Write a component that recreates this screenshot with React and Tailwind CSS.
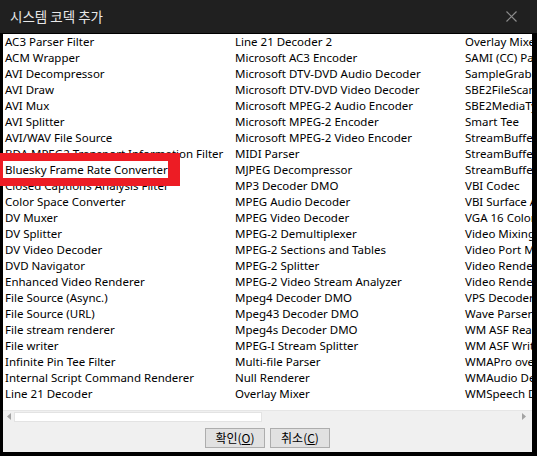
import React from "react";

const col1 = [
  "AC3 Parser Filter",
  "ACM Wrapper",
  "AVI Decompressor",
  "AVI Draw",
  "AVI Mux",
  "AVI Splitter",
  "AVI/WAV File Source",
  "BDA MPEG2 Transport Information Filter",
  "Bluesky Frame Rate Converter",
  "Closed Captions Analysis Filter",
  "Color Space Converter",
  "DV Muxer",
  "DV Splitter",
  "DV Video Decoder",
  "DVD Navigator",
  "Enhanced Video Renderer",
  "File Source (Async.)",
  "File Source (URL)",
  "File stream renderer",
  "File writer",
  "Infinite Pin Tee Filter",
  "Internal Script Command Renderer",
  "Line 21 Decoder",
];

const col2 = [
  "Line 21 Decoder 2",
  "Microsoft AC3 Encoder",
  "Microsoft DTV-DVD Audio Decoder",
  "Microsoft DTV-DVD Video Decoder",
  "Microsoft MPEG-2 Audio Encoder",
  "Microsoft MPEG-2 Encoder",
  "Microsoft MPEG-2 Video Encoder",
  "MIDI Parser",
  "MJPEG Decompressor",
  "MP3 Decoder DMO",
  "MPEG Audio Decoder",
  "MPEG Video Decoder",
  "MPEG-2 Demultiplexer",
  "MPEG-2 Sections and Tables",
  "MPEG-2 Splitter",
  "MPEG-2 Video Stream Analyzer",
  "Mpeg4 Decoder DMO",
  "Mpeg43 Decoder DMO",
  "Mpeg4s Decoder DMO",
  "MPEG-I Stream Splitter",
  "Multi-file Parser",
  "Null Renderer",
  "Overlay Mixer",
];

const col3 = [
  "Overlay Mixer2",
  "SAMI (CC) Parser",
  "SampleGrabber",
  "SBE2FileScan",
  "SBE2MediaTypeProfile",
  "Smart Tee",
  "StreamBufferSink",
  "StreamBufferSource",
  "StreamBufferSink2",
  "VBI Codec",
  "VBI Surface Allocator",
  "VGA 16 Color Ditherer",
  "Video Mixing Renderer 9",
  "Video Port Manager",
  "Video Renderer",
  "Video Renderer",
  "VPS Decoder",
  "Wave Parser",
  "WM ASF Reader",
  "WM ASF Writer",
  "WMAPro over S/PDIF MFT",
  "WMAudio Decoder DMO",
  "WMSpeech Decoder DMO",
];

const Column = ({ items }) => (
  <div className="w-[230px] shrink-0 pl-[2px]">
    {items.map((name, i) => (
      <div key={i} className="h-4 leading-4 whitespace-nowrap">
        {name}
      </div>
    ))}
  </div>
);

const App = () => {
  return (
    <div
      className="w-[537px] h-[456px] bg-black flex flex-col overflow-hidden relative"
      style={{ fontFamily: '"Noto Sans", "Noto Sans CJK KR", sans-serif' }}
    >
      {/* Title bar */}
      <div className="h-[33px] bg-[#202020] flex items-center justify-between pl-[10px] pr-[20px] shrink-0">
        <span className="text-[13.5px] text-[#e8e8e8]" style={{ fontFamily: '"Noto Sans CJK KR", sans-serif' }}>
          시스템 코덱 추가
        </span>
        <svg width="11" height="11" viewBox="0 0 11 11" className="text-[#8c8c8c]">
          <path d="M0.5 0.5 L10.5 10.5 M10.5 0.5 L0.5 10.5" stroke="currentColor" strokeWidth="1.2" />
        </svg>
      </div>
      <div className="h-px bg-black shrink-0" />

      {/* Body */}
      <div className="ml-[3px] mr-[5px] flex flex-col shrink-0">
        <div className="h-[376px] bg-white flex overflow-hidden text-[11.5px] text-black">
          <Column items={col1} />
          <Column items={col2} />
          <Column items={col3} />
        </div>

        {/* Horizontal scrollbar */}
        <div className="h-[12px] bg-[#f0f0f0] border-t border-[#e6e6e6] flex items-center">
          <div className="w-[11px] flex items-center justify-center">
            <svg width="4" height="7" viewBox="0 0 4 7">
              <path d="M4 0 L0 3.5 L4 7 Z" fill="#a3a3a3" />
            </svg>
          </div>
          <div className="w-[248px] h-[10px] bg-white border border-[#e3e3e3]" />
          <div className="flex-1" />
          <div className="w-[16px] flex items-center justify-center">
            <svg width="4" height="7" viewBox="0 0 4 7">
              <path d="M0 0 L4 3.5 L0 7 Z" fill="#a3a3a3" />
            </svg>
          </div>
        </div>

        {/* Footer */}
        <div
          className="h-[30px] bg-[#f0f0f0] flex items-center justify-center gap-[5px] pt-[2px] text-[12px] text-black"
          style={{ fontFamily: '"Noto Sans CJK KR", sans-serif' }}
        >
          <button className="w-[60px] h-[20px] bg-[#e1e1e1] border border-[#adadad] flex items-center justify-center leading-none">
            확인(<span className="underline">O</span>)
          </button>
          <button className="w-[60px] h-[20px] bg-[#e1e1e1] border border-[#adadad] flex items-center justify-center leading-none">
            취소(<span className="underline">C</span>)
          </button>
        </div>
      </div>

      {/* Red highlight box */}
      <div className="absolute left-0 top-[153px] w-[180px] h-[33px] border-[#ed1c24] border-t-[8px] border-b-[8px] border-l-[3px] border-r-[12px] bg-white flex items-center pl-[2px] text-[11.5px] leading-4 text-black whitespace-nowrap overflow-hidden">
        Bluesky Frame Rate Converter
      </div>
    </div>
  );
};

export default App;
